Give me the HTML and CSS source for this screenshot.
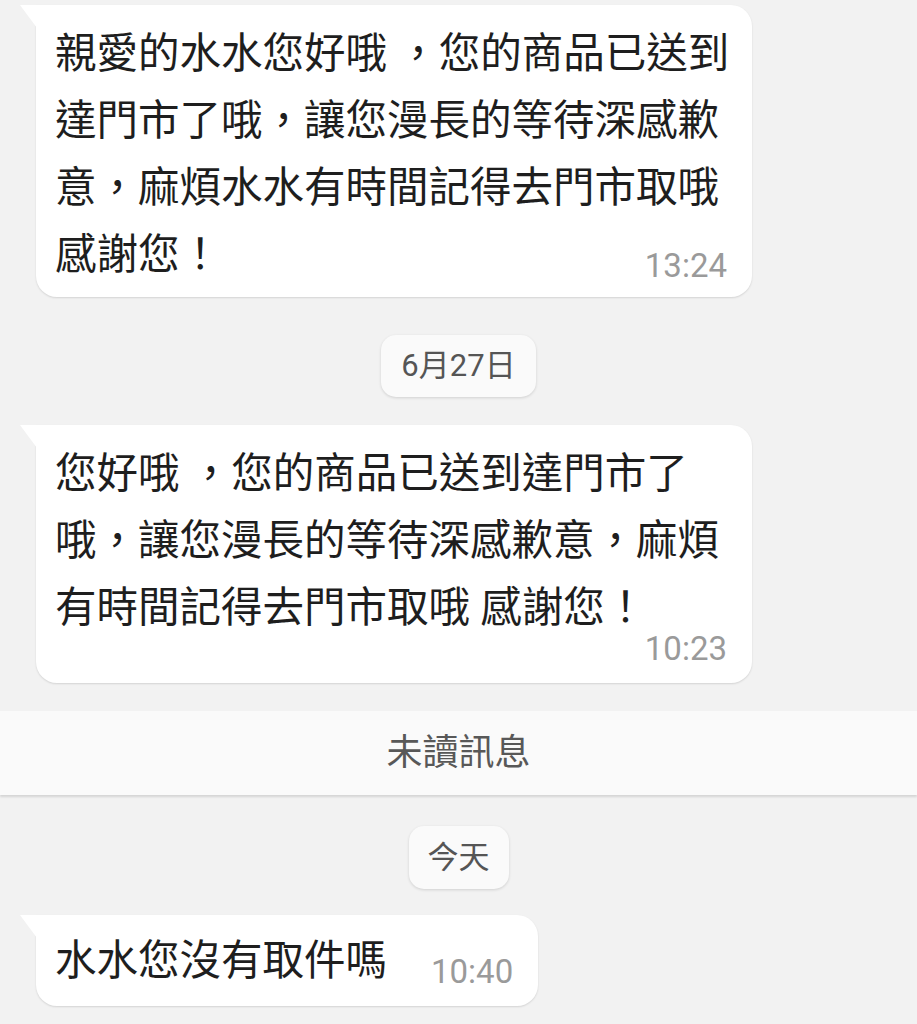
FILE: index.html
```html
<!DOCTYPE html>
<html lang="zh-Hant">
<head>
<meta charset="utf-8">
<title>聊天</title>
<link rel="stylesheet" href="styles.css">
</head>
<body>
<main class="chat">
  <div class="row row--first">
    <div class="bubble bubble--wide">親愛的水水您好哦 ，您的商品已送到<br>達門市了哦，讓您漫長的等待深感歉<br>意，麻煩水水有時間記得去門市取哦<br>感謝您！<span class="time">13:24</span></div>
  </div>
  <div class="date date--first"><span class="chip">6月27日</span></div>
  <div class="row">
    <div class="bubble bubble--wide bubble--stack">您好哦 ，您的商品已送到達門市了<br>哦，讓您漫長的等待深感歉意，麻煩<br>有時間記得去門市取哦 感謝您！<span class="time time--below">10:23</span></div>
  </div>
  <div class="unread">未讀訊息</div>
  <div class="date date--today"><span class="chip chip--today">今天</span></div>
  <div class="row row--last">
    <div class="bubble bubble--short">水水您沒有取件嗎<span class="time time--gap">10:40</span></div>
  </div>
</main>
</body>
</html>
```

FILE: styles.css
```css
* {
  box-sizing: border-box;
}

html, body {
  margin: 0;
  padding: 0;
  background: #f2f2f2;
}

body {
  width: 917px;
  height: 1024px;
  overflow: hidden;
  font-family: Roboto, "Noto Sans CJK TC", sans-serif;
  color: #1e1e1e;
}

.chat {
  display: flex;
  flex-direction: column;
  padding-top: 5px;
}

.row {
  display: flex;
  padding-left: 36px;
  margin-top: 28px;
}

.row--first {
  margin-top: 0;
}

.row--last {
  margin-top: 26px;
}

.bubble {
  position: relative;
  display: flow-root;
  background: #ffffff;
  border-radius: 0 21px 21px 21px;
  box-shadow: 0 1px 2px rgba(0, 0, 0, 0.13);
  font-size: 41.5px;
  line-height: 67px;
  padding: 15px 25px 9px 19px;
  white-space: nowrap;
}

.bubble::before {
  content: "";
  position: absolute;
  left: -16px;
  top: 0;
  width: 17px;
  height: 23px;
  background: #ffffff;
  clip-path: polygon(0 0, 100% 0, 100% 100%);
}

.bubble--wide {
  width: 716px;
}

.bubble--short {
  padding: 11.5px 25px 12.5px 19px;
}

.time {
  float: right;
  font-family: Roboto, "Noto Sans CJK TC", sans-serif;
  font-size: 33px;
  line-height: 32px;
  color: #9a9a9a;
  margin-top: 29px;
}

.time--below {
  float: none;
  display: block;
  text-align: right;
  margin-top: -8px;
  margin-bottom: 9px;
}

.time--gap {
  margin-left: 44px;
}

.date {
  display: flex;
  justify-content: center;
  margin-top: 28px;
}

.date--first {
  margin-top: 38px;
}

.date--today {
  margin-top: 31px;
}

.chip {
  display: block;
  height: 62px;
  line-height: 62px;
  padding: 0 20px;
  border-radius: 15px;
  background: #fafafa;
  box-shadow: 0 1px 3px rgba(0, 0, 0, 0.14);
  font-size: 31px;
  color: #555555;
}

.chip--today {
  height: 63px;
  line-height: 63px;
  padding: 0 19px;
}

.unread {
  margin-top: 28px;
  height: 84px;
  line-height: 84px;
  text-align: center;
  background: #fafafa;
  box-shadow: 0 2px 2px rgba(0, 0, 0, 0.12);
  font-size: 36px;
  color: #585858;
}
```
